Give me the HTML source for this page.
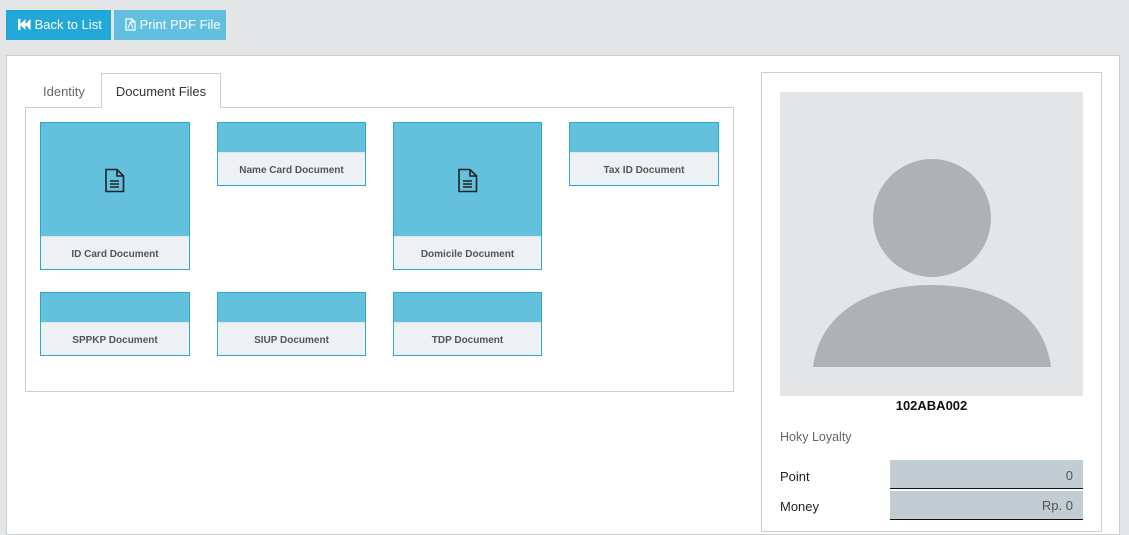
<!DOCTYPE html>
<html><head><style>
*{box-sizing:border-box;margin:0;padding:0}
body{width:1129px;height:521px;background:#e4e5e7;font-family:"Liberation Sans",sans-serif;position:relative;overflow:hidden;font-size:13px}
.a{position:absolute}
.btn{top:10px;height:30px;color:#fff;font-size:13px;line-height:30px;padding-left:12px}
.card{position:absolute;width:150px;border:1px solid #2aa6cf;background:#63c1de}
.card .l{position:absolute;left:0;right:0;bottom:0;height:33px;background:#eef1f4;border-top:1px solid #dfe4e8;font-size:10px;font-weight:bold;color:#555;text-align:center;line-height:35px}
</style></head><body>
<div class="a btn" style="left:6px;width:105px;background:#21a8d8">
<svg width="13" height="11" style="vertical-align:-1px" viewBox="0 0 13 11"><rect x="0" y="0" width="2.5" height="11" fill="#fff"/><path d="M2 5.5 7.5 0V11Z M7 5.5 12.5 0V11Z" fill="#fff"/></svg> Back to List</div>
<div class="a btn" style="left:114px;width:112px;background:#63bfe0;padding-left:11px">
<svg width="11" height="13" style="vertical-align:-2px" viewBox="0 0 11 13"><path d="M1 1H7L10 4V12H1Z M7 1V4H10" fill="none" stroke="#fff" stroke-width="1.2"/><path d="M3 10 5.5 4 8 10" fill="none" stroke="#fff"/></svg> Print PDF File</div>
<div class="a" style="left:6px;top:55px;width:1114px;height:480px;background:#fff;border:1px solid #c8d0d6"></div>
<div class="a" style="left:25px;top:107px;width:709px;height:285px;border:1px solid #c8d0d6"></div>
<div class="a" style="left:43px;top:84px;color:#666;font-size:13px">Identity</div>
<div class="a" style="left:101px;top:73px;width:120px;height:35px;background:#fff;border:1px solid #c8d0d6;border-bottom:none;text-align:center;line-height:36px;color:#333">Document Files</div>

<div class="card" style="left:40px;top:122px;height:148px"><svg class="a" style="left:63px;top:45px" width="22" height="25" viewBox="0 0 22 25"><path d="M2 1.5H13L19.5 8V23.5H2Z M13 1.5V8H19.5" fill="none" stroke="#222" stroke-width="1.6"/><path d="M6 13H15M6 16H15M6 19H15" stroke="#222" stroke-width="1.4"/></svg><div class="l">ID Card Document</div></div>
<div class="card" style="left:217px;top:122px;height:64px;width:149px"><div class="l">Name Card Document</div></div>
<div class="card" style="left:393px;top:122px;height:148px;width:149px"><svg class="a" style="left:63px;top:45px" width="22" height="25" viewBox="0 0 22 25"><path d="M2 1.5H13L19.5 8V23.5H2Z M13 1.5V8H19.5" fill="none" stroke="#222" stroke-width="1.6"/><path d="M6 13H15M6 16H15M6 19H15" stroke="#222" stroke-width="1.4"/></svg><div class="l">Domicile Document</div></div>
<div class="card" style="left:569px;top:122px;height:64px"><div class="l">Tax ID Document</div></div>
<div class="card" style="left:40px;top:292px;height:64px"><div class="l">SPPKP Document</div></div>
<div class="card" style="left:217px;top:292px;height:64px;width:149px"><div class="l">SIUP Document</div></div>
<div class="card" style="left:393px;top:292px;height:64px;width:149px"><div class="l">TDP Document</div></div>

<div class="a" style="left:761px;top:72px;width:341px;height:460px;border:1px solid #c8d0d6;background:#fff"></div>
<div class="a" style="left:780px;top:92px;width:303px;height:304px;background:#e4e5e7;overflow:hidden">
<svg width="303" height="304"><circle cx="152" cy="126" r="59" fill="#aeb2b5"/><path d="M33 275C40 220 90 193 152 193C214 193 264 220 271 275Z" fill="#aeb2b5"/></svg></div>
<div class="a" style="left:780px;top:398px;width:303px;text-align:center;font-weight:bold;font-size:13px;color:#111">102ABA002</div>
<div class="a" style="left:780px;top:430px;color:#666;font-size:12.5px">Hoky Loyalty</div>
<div class="a" style="left:780px;top:469px;color:#222">Point</div>
<div class="a" style="left:780px;top:499px;color:#222">Money</div>
<div class="a" style="left:890px;top:460px;width:193px;height:29px;background:#c2ccd3;border-bottom:1px solid #111;text-align:right;padding-right:10px;line-height:32px;color:#555">0</div>
<div class="a" style="left:890px;top:491px;width:193px;height:29px;background:#c2ccd3;border-bottom:1px solid #111;text-align:right;padding-right:10px;line-height:30px;color:#555">Rp. 0</div>
</body></html>
